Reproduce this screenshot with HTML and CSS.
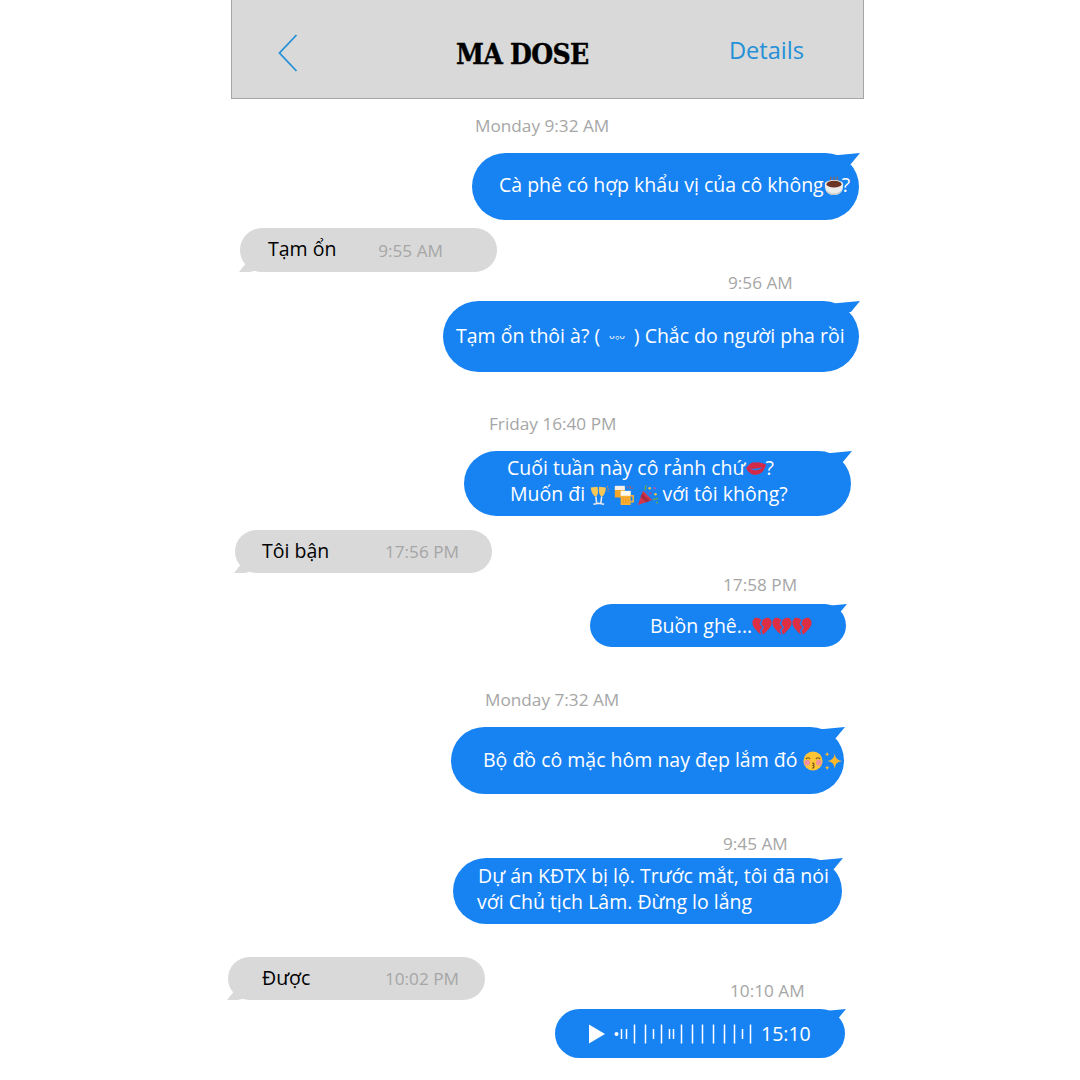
FILE: index.html
```html
<!DOCTYPE html>
<html lang="en">
<head>
  <meta charset="UTF-8">
  <meta name="viewport" content="width=device-width, initial-scale=1.0">
  <title>MA DOSE</title>
  <link rel="stylesheet" href="styles.css">
</head>
<body>
  <svg class="emoji-defs" width="0" height="0" aria-hidden="true">
    <defs>
      <symbol id="e-coffee" viewBox="0 0 24 24">
        <path d="M8 9C6.500 6 9 5 8 2M12 9c-1.500-3 1-4 0-7M16 9c-1.500-3 1-4 0-7" fill="none" stroke="#8f6a58" stroke-width="1.400"/>
        <path d="M1 11c0-3 5-5 11-5s11 2 11 5c0 5-1 9-4 11-1 1-3 2-7 2s-6-1-7-2c-3-2-4-6-4-11z" fill="#ececec"/>
        <ellipse cx="12" cy="11" rx="9" ry="4" fill="#6a3426"/>
        <path d="M3 18c2 3 5 4 9 4s7-1 9-4c0 3-3 6-9 6s-9-3-9-6z" fill="#c9c9c9"/>
      </symbol>
      <symbol id="e-lips" viewBox="0 0 24 24">
        <path d="M0 11C3 7 7 3.500 10 4c1 .2 1.500 .6 2.500 .3C15 3 20 5 24 7c-1.500 7-7 12-13 12C6 19 2 15 0 11z" fill="#d42a4a"/>
        <path d="M5 11c4 1.500 10 .5 14.500-1-3 4-10 5-14.500 1z" fill="#1782f2"/>
      </symbol>
      <symbol id="e-glasses" viewBox="0 0 24 24">
        <path d="M1 3l8-1c1 5 1 10-2 12-3-1-6-6-6-11zM11 2l8 1c0 5-2 10-5 11-3-2-4-7-3-12z" fill="#f6c757"/>
        <path d="M7 14l1 8M14 14l-1 8M4 23l7-1M10 22l7 1" stroke="#ececec" stroke-width="1.800" fill="none"/>
        <path d="M21 1v2M23 5h-2M22 8l-1-1" stroke="#e8834a" stroke-width="1"/>
      </symbol>
      <symbol id="e-beers" viewBox="0 0 24 24">
        <path d="M1 3h12v12H1z" fill="#f4a62a"/>
        <path d="M1 1h12v5H1z" fill="#f6f1e4"/>
        <path d="M8 8h12v16H8z" fill="#f9b233"/>
        <path d="M8 7h12v6H8z" fill="#fbf8ee"/>
        <path d="M20 13h3v7h-3" fill="none" stroke="#f9b233" stroke-width="1.800"/>
        <path d="M11 15v7M14 15v7M17 15v7" stroke="#e8921c" stroke-width="1"/>
        <path d="M19 1l1 3M23 3l-2 2M16 2l1 2" stroke="#e0553a" stroke-width="1.100"/>
      </symbol>
      <symbol id="e-party" viewBox="0 0 24 24">
        <path d="M0 24L6 7l11 11z" fill="#d4344c"/>
        <path d="M5 10l9 9-4 2-7-7z" fill="#a82a42"/>
        <path d="M8 6c2-2 0-3 2-6M18 18c2-2 3 0 6-2" fill="none" stroke="#6eaa4a" stroke-width="1.500"/>
        <circle cx="14" cy="4" r="1.500" fill="#f4c542"/>
        <circle cx="20" cy="4" r="1.500" fill="#9a5fb8"/>
        <circle cx="21" cy="11" r="1.500" fill="#f4c542"/>
        <circle cx="15" cy="10" r="1.500" fill="#8e4fb0"/>
        <circle cx="11" cy="8" r="1.200" fill="#4a74c8"/>
        <circle cx="23" cy="21" r="1.200" fill="#6eaa4a"/>
      </symbol>
      <symbol id="e-broken" viewBox="0 0 24 24">
        <path d="M11 4.500C9 2.500 7 2 5.500 2 2.800 2 .5 4.500 .5 8c0 5.500 5.500 10 10.500 14.500L9.500 17l3-3.500L9 9.500z" fill="#dd2e44"/>
        <path d="M13 4.500C15 2.500 17 2 18.500 2c2.700 0 5 2.500 5 6 0 5.500-5.500 10-10.500 14.500L11.500 17l3-3.500L11 9.500z" fill="#dd2e44"/>
      </symbol>
      <symbol id="e-kiss" viewBox="0 0 24 24">
        <circle cx="12" cy="12" r="11.500" fill="#fdc536"/>
        <circle cx="5" cy="14" r="3.500" fill="#f4929c"/>
        <circle cx="19" cy="14" r="3.500" fill="#f4929c"/>
        <path d="M3.500 9.500c1-2 4-2 5 0M15.500 9.500c1-2 4-2 5 0" fill="none" stroke="#6a4a1a" stroke-width="1.300"/>
        <path d="M11 14.500c3 0 3 2.500 .5 3 2.500 .5 2.500 3-.5 3" fill="none" stroke="#6a4a1a" stroke-width="1.300"/>
      </symbol>
      <symbol id="e-spark" viewBox="0 0 24 24">
        <path d="M14 3c1 6 3 8 9.500 9-6.500 1-8.500 3-9.500 9-1-6-3-8-9-9 6-1 8-3 9-9z" fill="#fdb92e"/>
        <path d="M5 1c.4 2 1 2.600 3 3-2 .4-2.600 1-3 3-.4-2-1-2.600-3-3 2-.4 2.600-1 3-3zM5 17c.4 2 1 2.600 3 3-2 .4-2.600 1-3 3-.4-2-1-2.600-3-3 2-.4 2.600-1 3-3z" fill="#fdb92e"/>
      </symbol>
    </defs>
  </svg>

  <div class="phone">
    <header class="topbar">
      <svg class="back-icon" viewBox="0 0 20 38"><path d="M18.500 1L1.500 19l17 18" fill="none" stroke="#2490d8" stroke-width="1.800"/></svg>
      <h1 class="topbar-title">MA DOSE</h1>
      <a class="topbar-link" href="#">Details</a>
    </header>

    <main class="chat">
      <div class="stamp stamp-1">Monday 9:32 AM</div>
      <div class="bubble sent b-coffee">Cà phê có hợp khẩu vị của cô không<svg class="emoji"><use href="#e-coffee"/></svg>?</div>

      <div class="bubble received r-1"><span>Tạm ổn</span><span class="inline-time">9:55 AM</span></div>

      <div class="stamp stamp-2">9:56 AM</div>
      <div class="bubble sent b-pha">Tạm ổn thôi à? ( <span class="kaomoji">ᵕ◦ᵕ</span> ) Chắc do người pha rồi</div>

      <div class="stamp stamp-3">Friday 16:40 PM</div>
      <div class="bubble sent b-weekend">
        <div class="line-1">Cuối tuần này cô rảnh chứ<svg class="emoji"><use href="#e-lips"/></svg>?</div>
        <div class="line-2">Muốn đi <svg class="emoji"><use href="#e-glasses"/></svg> <svg class="emoji"><use href="#e-beers"/></svg> <svg class="emoji"><use href="#e-party"/></svg> với tôi không?</div>
      </div>

      <div class="bubble received r-2"><span>Tôi bận</span><span class="inline-time">17:56 PM</span></div>

      <div class="stamp stamp-4">17:58 PM</div>
      <div class="bubble sent b-sad">Buồn ghê...<svg class="emoji"><use href="#e-broken"/></svg><svg class="emoji"><use href="#e-broken"/></svg><svg class="emoji"><use href="#e-broken"/></svg></div>

      <div class="stamp stamp-5">Monday 7:32 AM</div>
      <div class="bubble sent b-outfit">Bộ đồ cô mặc hôm nay đẹp lắm đó <svg class="emoji"><use href="#e-kiss"/></svg><svg class="emoji"><use href="#e-spark"/></svg></div>

      <div class="stamp stamp-6">9:45 AM</div>
      <div class="bubble sent b-project">
        <div class="line-3">Dự án KĐTX bị lộ. Trước mắt, tôi đã nói</div>
        <div>với Chủ tịch Lâm. Đừng lo lắng</div>
      </div>

      <div class="bubble received r-3"><span>Được</span><span class="inline-time">10:02 PM</span></div>

      <div class="stamp stamp-7">10:10 AM</div>
      <div class="bubble sent b-voice">
        <svg class="wave" viewBox="0 0 172 24" width="172" height="24">
          <path d="M0 2.500L16 12 0 21.500z" fill="#fff"/>
          <circle cx="27.500" cy="12" r="2" fill="#fff"/>
          <path d="M32.500 7v10M37.500 7v10M45.500 2.500v19M56.500 2.500v19M64.500 7v10M72.500 2.500v19M80.500 7v10M84.500 7v10M92.500 2.500v19M103.500 2.500v19M113.500 2.500v19M124.500 2.500v19M135.500 2.500v19M145.500 2.500v19M153.500 7v10M161.500 2.500v19" stroke="#fff" stroke-width="1.500" fill="none"/>
        </svg>
        <span class="voice-time">15:10</span>
      </div>
    </main>
  </div>
</body>
</html>
```

FILE: styles.css
```css
:root {
  --blue: #1782f2;
  --grey: #d9d9d9;
  --stamp: #a6a6a6;
  --link: #2490d8;
}

* {
  box-sizing: border-box;
  margin: 0;
  padding: 0;
}

body {
  font-family: 'Open Sans', 'Liberation Sans', sans-serif;
  background-color: #ffffff;
  color: #000000;
  height: 1080px;
  overflow: hidden;
}

.emoji-defs {
  position: absolute;
}

.phone {
  width: 633px;
  margin-left: 231px;
}

.topbar {
  display: flex;
  align-items: center;
  height: 99px;
  padding: 3px 59px 0 46px;
  background-color: var(--grey);
  border: 1px solid #a5a5a5;
  border-top: none;
}

.back-icon {
  width: 20px;
  height: 38px;
  margin-top: 5px;
}

.topbar-title {
  margin-top: 8px;
  margin-left: 158px;
  font-family: 'DejaVu Serif Condensed', 'DejaVu Serif', serif;
  font-size: 28px;
  font-weight: 700;
  letter-spacing: -0.7px;
  line-height: 1;
  -webkit-text-stroke: 0.4px #000000;
}

.topbar-link {
  margin-left: auto;
  margin-bottom: 2px;
  color: var(--link);
  font-size: 23.6px;
  text-decoration: none;
}

.chat {
  display: flex;
  flex-direction: column;
  align-items: flex-start;
}

.stamp {
  color: var(--stamp);
  font-size: 17.2px;
  line-height: 24px;
}

.stamp-1 { margin: 15px 0 0 244px; }
.stamp-2 { margin: -1px 0 0 497px; }
.stamp-3 { margin: 40px 0 0 258px; }
.stamp-4 { margin: 0 0 0 492px; }
.stamp-5 { margin: 41px 0 0 254px; }
.stamp-6 { margin: 38px 0 0 492px; }
.stamp-7 { margin: -21px 0 0 499px; }

.bubble {
  position: relative;
  display: flex;
  align-items: center;
  font-size: 19.5px;
  line-height: 26px;
  white-space: nowrap;
}

.sent {
  background-color: var(--blue);
  color: #ffffff;
  border-radius: 36px;
}

.sent::after {
  content: '';
  position: absolute;
  top: 0;
  right: -1px;
  width: 24px;
  height: 11px;
  background-color: var(--blue);
  clip-path: polygon(0 20%, 100% 0, 62% 100%, 0 100%);
}

.received {
  background-color: var(--grey);
  border-radius: 22px;
  width: 257px;
  height: 44px;
  margin-top: 8px;
  padding-bottom: 2px;
}

.received::after {
  content: '';
  position: absolute;
  bottom: 0;
  left: -1px;
  width: 18px;
  height: 9px;
  background-color: var(--grey);
  clip-path: polygon(0 100%, 40% 0, 100% 80%, 60% 100%);
}

.inline-time {
  color: var(--stamp);
  font-size: 17.2px;
  margin-left: auto;
  margin-top: 3px;
}

.r-1 { margin-left: 9px; padding-left: 28px; padding-right: 54px; }
.r-2 { margin-left: 4px; margin-top: 14px; padding-left: 27px; padding-right: 33px; height: 43px; }
.r-3 { margin-left: -3px; margin-top: 33px; padding-left: 34px; padding-right: 26px; height: 43px; }

.emoji {
  width: 20px;
  height: 20px;
  flex-shrink: 0;
  vertical-align: -4px;
}

.kaomoji {
  margin: 0 4px;
  font-size: 14px;
  vertical-align: 1px;
}

.b-coffee { margin: 15px 0 0 241px; width: 387px; height: 67px; padding: 0 0 3px 27px; }
.b-coffee .emoji { margin-right: -2px; }
.b-pha { margin: 6px 0 0 212px; width: 416px; height: 71px; padding: 0 0 2px 13px; display: block; line-height: 69px; }
.b-weekend { margin: 15px 0 0 233px; width: 387px; height: 65px; padding-top: 4px; display: block; }
.line-1 { margin-left: 43px; }
.line-2 { margin-left: 46px; }
.line-2 .emoji { margin-right: -1px; }
.b-sad { margin: 7px 0 0 359px; width: 256px; height: 43px; padding-left: 60px; }
.b-outfit { margin: 15px 0 0 220px; width: 393px; height: 67px; padding-left: 32px; display: block; line-height: 66px; }
.b-project { margin: 2px 0 0 222px; width: 389px; height: 66px; padding: 5px 0 0 24px; display: block; }
.line-3 { margin-left: 1px; }
.b-voice { margin: 6px 0 0 324px; width: 290px; height: 49px; padding-left: 34px; }

.wave {
  flex-shrink: 0;
}

.voice-time {
  font-size: 19.5px;
}
```
